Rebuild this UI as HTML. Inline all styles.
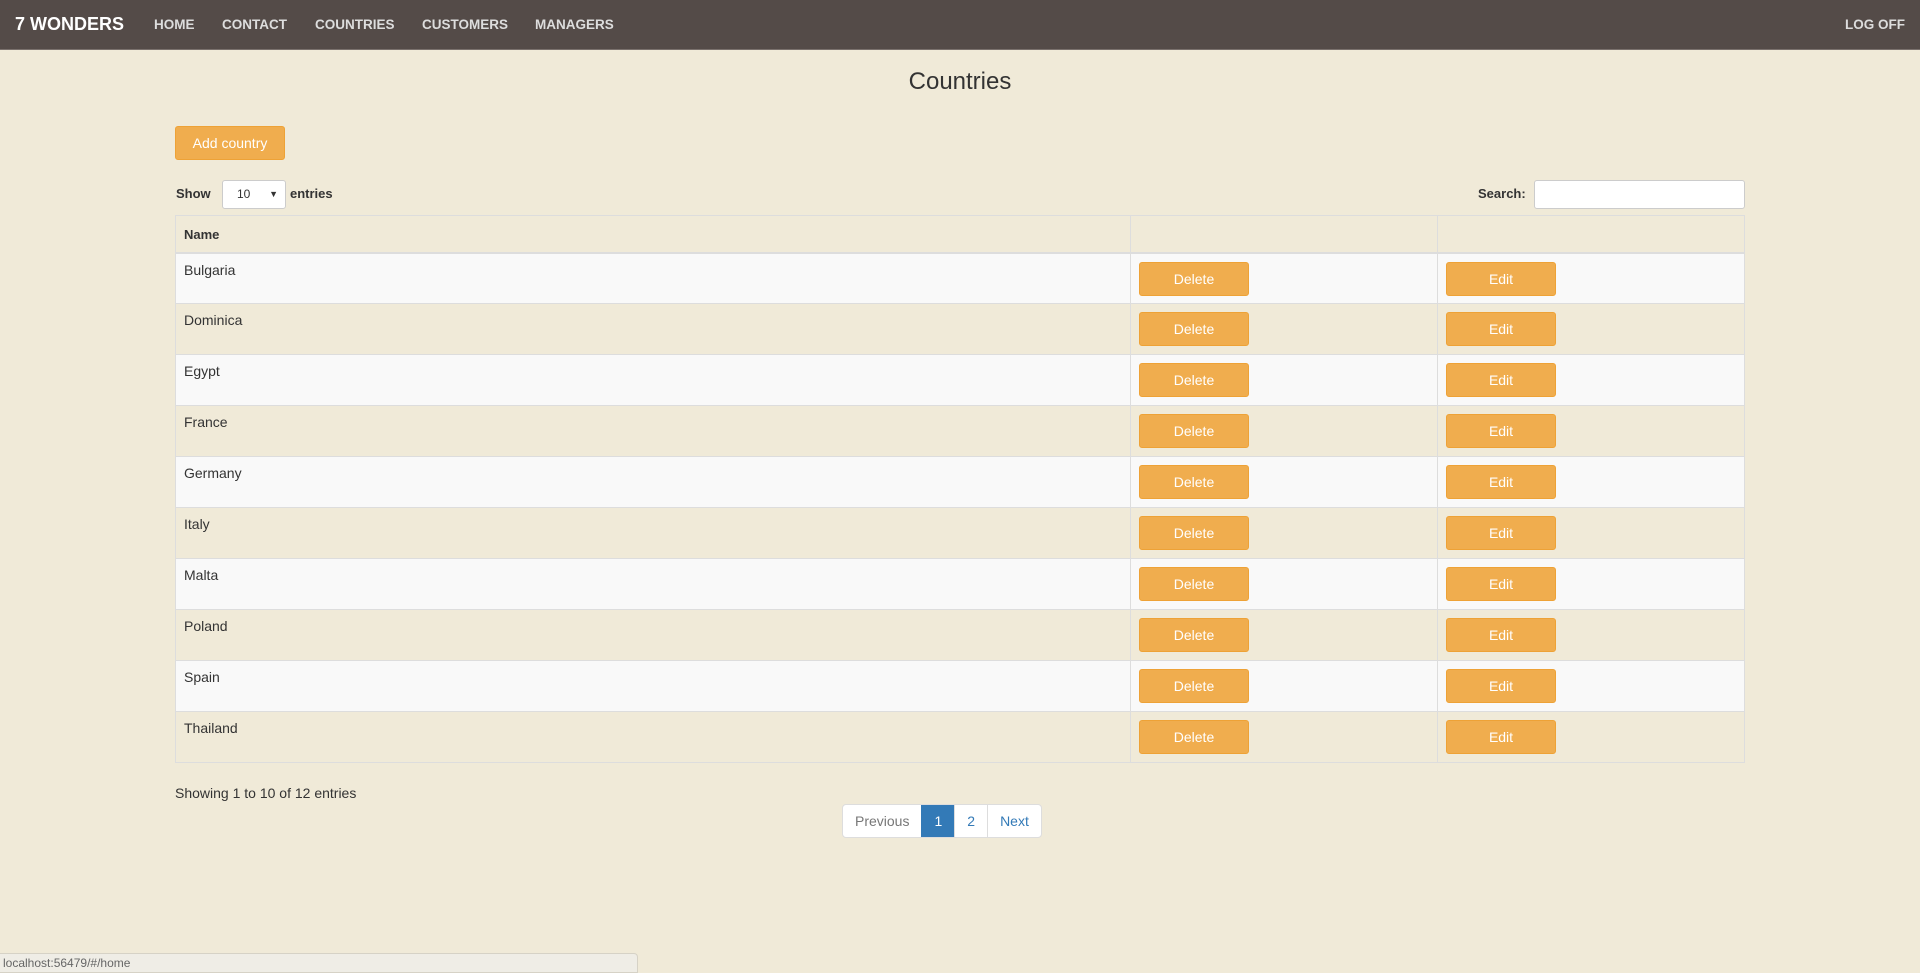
<!DOCTYPE html>
<html><head><meta charset="utf-8"><style>
*{box-sizing:border-box}
body{margin:0;width:1920px;height:973px;background:#f0ead8;font-family:"Liberation Sans",Arial,sans-serif;font-size:14px;color:#333;position:relative;overflow:hidden}
.nav{height:50px;background:#544b48;position:relative;border-bottom:1px solid #7a716d}
.nav a{position:absolute;top:0;line-height:49px;color:#ddd;font-weight:bold;font-size:13.5px;text-decoration:none}
.brand{left:15px;color:#fff!important;font-size:18px!important}
h1{position:absolute;top:68px;left:0;width:1920px;text-align:center;font-size:24px;font-weight:normal;margin:0;color:#333}
.btn{position:absolute;background:#f0ad4e;border:1px solid #eea236;border-radius:3px;color:#fff;text-align:center;font-size:14px}
.lbl{position:absolute;font-weight:bold;font-size:13px;color:#333}
.inp{position:absolute;background:#fff;border:1px solid #ccc;border-radius:3px}
table{position:absolute;left:175px;top:215px;width:1570px;border-collapse:collapse}
td,th{border:1px solid #ddd;padding:8px;vertical-align:top;text-align:left;position:relative}
th{height:37px;font-size:13px;border-bottom:2px solid #ddd;padding-top:11px}
td{height:51px}
tr.o td{background:#f9f9f9}
td .btn{position:absolute;left:8px;top:8px;width:110px;height:34px;line-height:32px}
.pg{position:absolute;left:842px;top:804px;height:34px;display:flex;border:1px solid #ddd;border-radius:4px;overflow:hidden;background:#fff}
.pg span{line-height:32px;padding:0 12px;color:#337ab7;border-left:1px solid #ddd}
.status{position:absolute;left:0;top:953px;width:638px;height:20px;background:#efede6;border:1px solid #d6d2c6;border-left:none;border-radius:0 4px 0 0;font-size:12px;color:#666;line-height:18px;padding-left:3px}
</style></head><body>
<div class="nav">
<a class="brand">7 WONDERS</a>
<a style="left:154px">HOME</a>
<a style="left:222px">CONTACT</a>
<a style="left:315px">COUNTRIES</a>
<a style="left:422px">CUSTOMERS</a>
<a style="left:535px">MANAGERS</a>
<a style="right:15px">LOG OFF</a>
</div>
<h1>Countries</h1>
<div class="btn" style="left:175px;top:126px;width:110px;height:34px;line-height:32px">Add country</div>
<div class="lbl" style="left:176px;top:186px">Show</div>
<div class="inp" style="left:222px;top:180px;width:64px;height:29px;font-size:12px;line-height:27px;padding-left:14px">10<span style="position:absolute;right:7px;font-size:9px">▼</span></div>
<div class="lbl" style="left:290px;top:186px">entries</div>
<div class="lbl" style="left:1478px;top:186px">Search:</div>
<div class="inp" style="left:1534px;top:180px;width:211px;height:29px"></div>
<table>
<tr><th style="width:955px">Name</th><th style="width:307px"></th><th></th></tr>
<tr class="o"><td>Bulgaria</td><td><div class="btn">Delete</div></td><td><div class="btn">Edit</div></td></tr>
<tr><td>Dominica</td><td><div class="btn">Delete</div></td><td><div class="btn">Edit</div></td></tr>
<tr class="o"><td>Egypt</td><td><div class="btn">Delete</div></td><td><div class="btn">Edit</div></td></tr>
<tr><td>France</td><td><div class="btn">Delete</div></td><td><div class="btn">Edit</div></td></tr>
<tr class="o"><td>Germany</td><td><div class="btn">Delete</div></td><td><div class="btn">Edit</div></td></tr>
<tr><td>Italy</td><td><div class="btn">Delete</div></td><td><div class="btn">Edit</div></td></tr>
<tr class="o"><td>Malta</td><td><div class="btn">Delete</div></td><td><div class="btn">Edit</div></td></tr>
<tr><td>Poland</td><td><div class="btn">Delete</div></td><td><div class="btn">Edit</div></td></tr>
<tr class="o"><td>Spain</td><td><div class="btn">Delete</div></td><td><div class="btn">Edit</div></td></tr>
<tr><td>Thailand</td><td><div class="btn">Delete</div></td><td><div class="btn">Edit</div></td></tr>
</table>
<div style="position:absolute;left:175px;top:785px">Showing 1 to 10 of 12 entries</div>
<div class="pg"><span style="color:#777;border-left:none">Previous</span><span style="background:#337ab7;color:#fff;border-color:#337ab7">1</span><span>2</span><span>Next</span></div>
<div class="status">localhost:56479/#/home</div>
</body></html>
